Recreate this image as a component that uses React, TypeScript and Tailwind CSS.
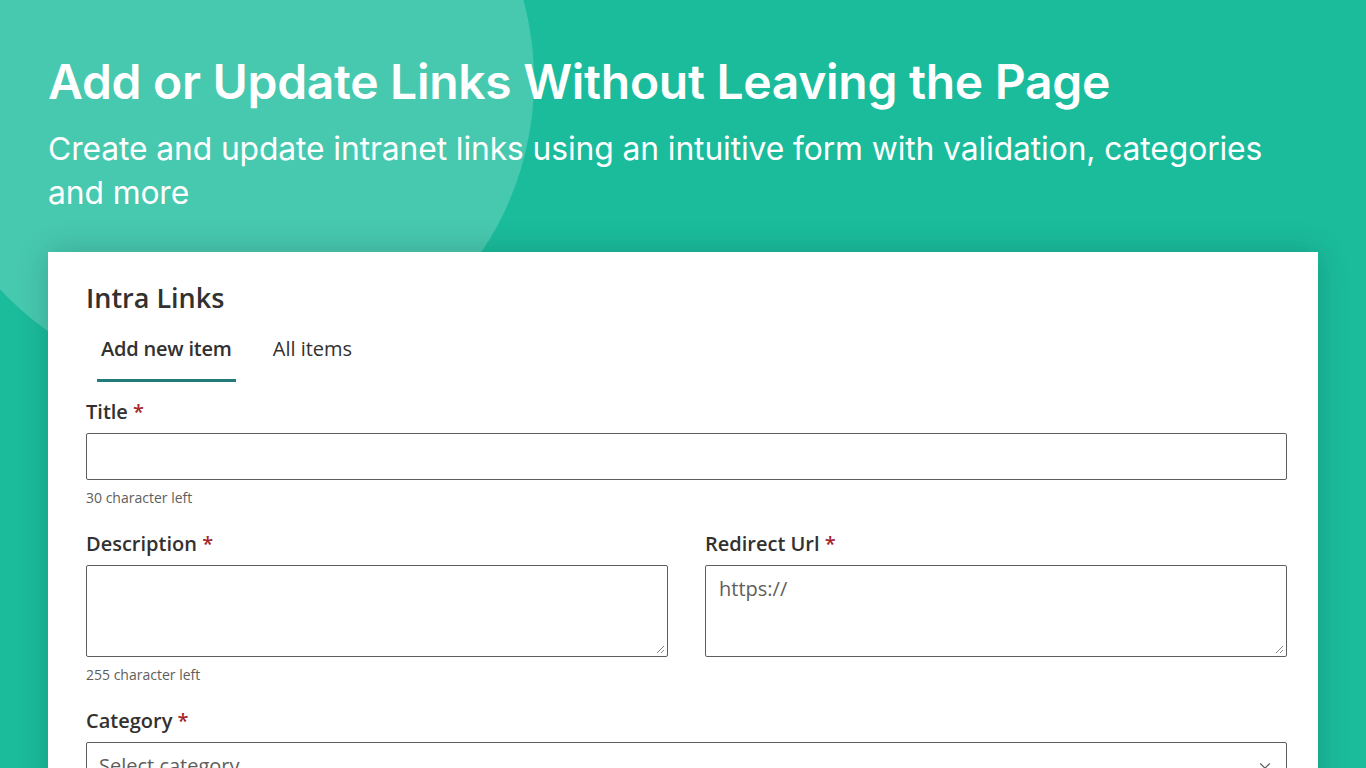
import { ChevronDown } from 'lucide-react';

function Label({ text }: { text: string }) {
  return (
    <div className="text-[20px] font-semibold text-[#323130] leading-[24px]">
      {text} <span className="text-[#a4262c]">*</span>
    </div>
  );
}

function ResizeGrip() {
  return (
    <svg className="absolute right-[2px] bottom-[2px]" width="10" height="10" viewBox="0 0 10 10">
      <path d="M9 2 L2 9 M9 6 L6 9" stroke="#8a8886" strokeWidth="1" fill="none" />
    </svg>
  );
}

function TextArea({ placeholder }: { placeholder?: string }) {
  return (
    <div className="relative mt-[9px] h-[92px] rounded-[2px] border border-[#605e5c] bg-white px-[13px] pt-[11px]">
      {placeholder && <span className="text-[20px] text-[#605e5c] leading-[24px]">{placeholder}</span>}
      <ResizeGrip />
    </div>
  );
}

export default function App() {
  return (
    <div className="relative h-[768px] w-[1366px] overflow-hidden bg-[#1abc9c] font-['Inter',sans-serif]">
      {/* soft circle behind the heading */}
      <div className="absolute left-[-82px] top-[-228px] h-[616px] w-[616px] rounded-full bg-white/20" />

      <div className="relative px-[48px] pt-[52px]">
        <h1 className="text-[48px] font-semibold leading-[60px] tracking-[-0.3px] text-white">
          Add or Update Links Without Leaving the Page
        </h1>
        <p className="mt-[15px] w-[1265px] text-[31.8px] leading-[44px] tracking-[-0.1px] text-white">
          Create and update intranet links using an intuitive form with validation, categories and more
        </p>

        <div className="mt-[37px] h-[560px] w-[1270px] bg-white pl-[38px] pr-[31px] pt-[30px] shadow-[0_0_30px_rgba(0,0,0,0.18)] font-['Open_Sans',sans-serif]">
          <div className="text-[27px] font-semibold leading-[32px] text-[#323130]">Intra Links</div>

          <div className="mt-[19px] flex gap-[11px]">
            <div className="flex flex-col">
              <div className="px-[15px] pt-[4px] pb-[18px] text-[20px] font-semibold leading-[24px] tracking-[-0.2px] text-[#323130]">
                Add new item
              </div>
              <div className="mx-[11px] h-[3px] bg-[#237a7a]" />
            </div>
            <div className="px-[15px] pt-[4px] text-[20px] leading-[24px] text-[#323130]">All items</div>
          </div>

          <div className="mt-[18px]">
            <Label text="Title" />
            <div className="mt-[9px] h-[47px] rounded-[2px] border border-[#605e5c]" />
            <div className="mt-[9px] text-[14px] leading-[18px] text-[#605e5c]">30 character left</div>
          </div>

          <div className="mt-[25px] grid grid-cols-2 gap-[37px]">
            <div>
              <Label text="Description" />
              <TextArea />
              <div className="mt-[9px] text-[14px] leading-[18px] text-[#605e5c]">255 character left</div>
            </div>
            <div>
              <Label text="Redirect Url" />
              <TextArea placeholder="https://" />
            </div>
          </div>

          <div className="mt-[25px]">
            <Label text="Category" />
            <div className="mt-[9px] flex h-[47px] items-center justify-between rounded-[2px] border border-[#605e5c] pl-[12px] pr-[12px]">
              <span className="text-[20px] text-[#605e5c] leading-[24px]">Select category</span>
              <ChevronDown className="h-[18px] w-[18px] text-[#605e5c]" strokeWidth={1.5} />
            </div>
          </div>
        </div>
      </div>
    </div>
  );
}
